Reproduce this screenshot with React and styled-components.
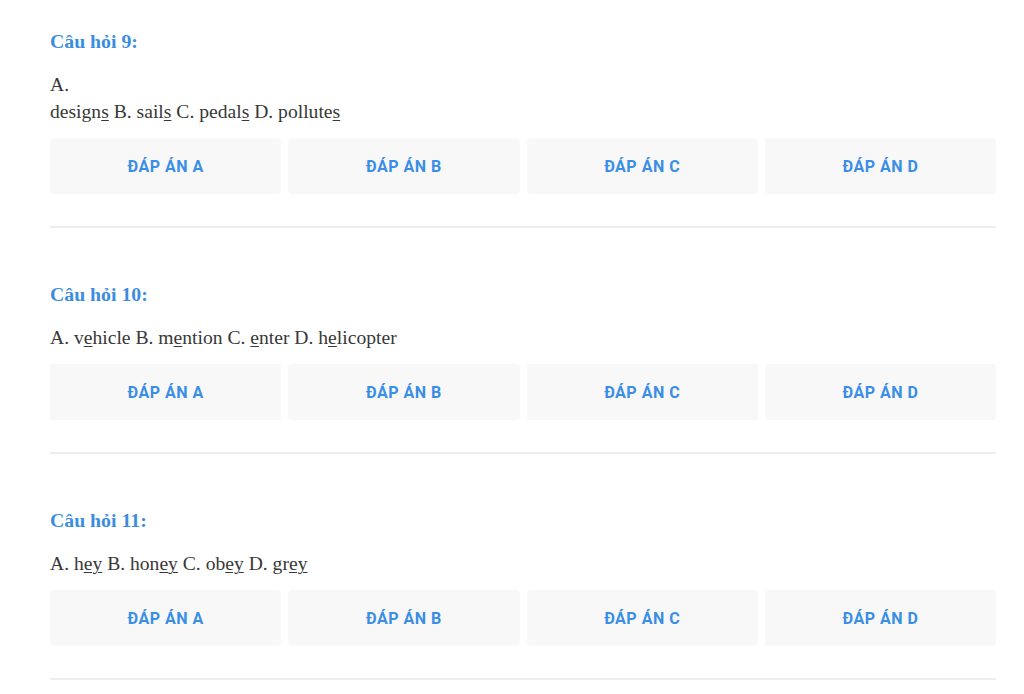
import React from 'react'
import styled, { createGlobalStyle } from 'styled-components'

const GlobalStyle = createGlobalStyle`
    body {
        margin: 0;
        background: #fff;
        font-family: "Liberation Serif", "Times New Roman", serif;
    }
`

const Page = styled.div`
    padding: 31px 28px 0 50px;
`

const Question = styled.section`
    padding-top: ${(p) => (p.first ? '0' : '56px')};
    padding-bottom: 32px;
    border-bottom: 2px solid #eeeeee;
`

const Title = styled.div`
    font-size: 19.8px;
    font-weight: 700;
    line-height: 20px;
    color: #3a8de0;
    margin-bottom: 20px;
`

const Body = styled.div`
    font-size: 19.6px;
    line-height: 27px;
    color: #383838;
    margin-bottom: 13px;

    u {
        text-decoration-thickness: 1px;
        text-underline-offset: 2px;
    }
`

const Answers = styled.div`
    display: grid;
    grid-template-columns: repeat(4, 1fr);
    gap: 7px;
`

const AnswerButton = styled.button`
    height: 56px;
    border: none;
    border-radius: 4px;
    background: #f8f8f8;
    color: #3a8ee6;
    font-family: Roboto, "Liberation Sans", Arial, sans-serif;
    font-size: 16px;
    font-weight: 700;
    letter-spacing: 0.5px;
    cursor: pointer;
`

const LETTERS = ['A', 'B', 'C', 'D']

const questions = [
    {
        id: 9,
        body: (
            <>
                A.
                <br />
                design<u>s</u> B. sail<u>s</u> C. pedal<u>s</u> D. pollute<u>s</u>
            </>
        ),
    },
    {
        id: 10,
        body: (
            <>
                A. v<u>e</u>hicle B. m<u>e</u>ntion C. <u>e</u>nter D. h<u>e</u>licopter
            </>
        ),
    },
    {
        id: 11,
        body: (
            <>
                A. h<u>ey</u> B. hon<u>ey</u> C. ob<u>ey</u> D. gr<u>ey</u>
            </>
        ),
    },
]

const App = () => (
    <>
        <GlobalStyle />
        <Page>
            {questions.map((q, i) => (
                <Question key={q.id} first={i === 0}>
                    <Title>Câu hỏi {q.id}:</Title>
                    <Body>{q.body}</Body>
                    <Answers>
                        {LETTERS.map((l) => (
                            <AnswerButton key={l}>ĐÁP ÁN {l}</AnswerButton>
                        ))}
                    </Answers>
                </Question>
            ))}
        </Page>
    </>
)

export default App
